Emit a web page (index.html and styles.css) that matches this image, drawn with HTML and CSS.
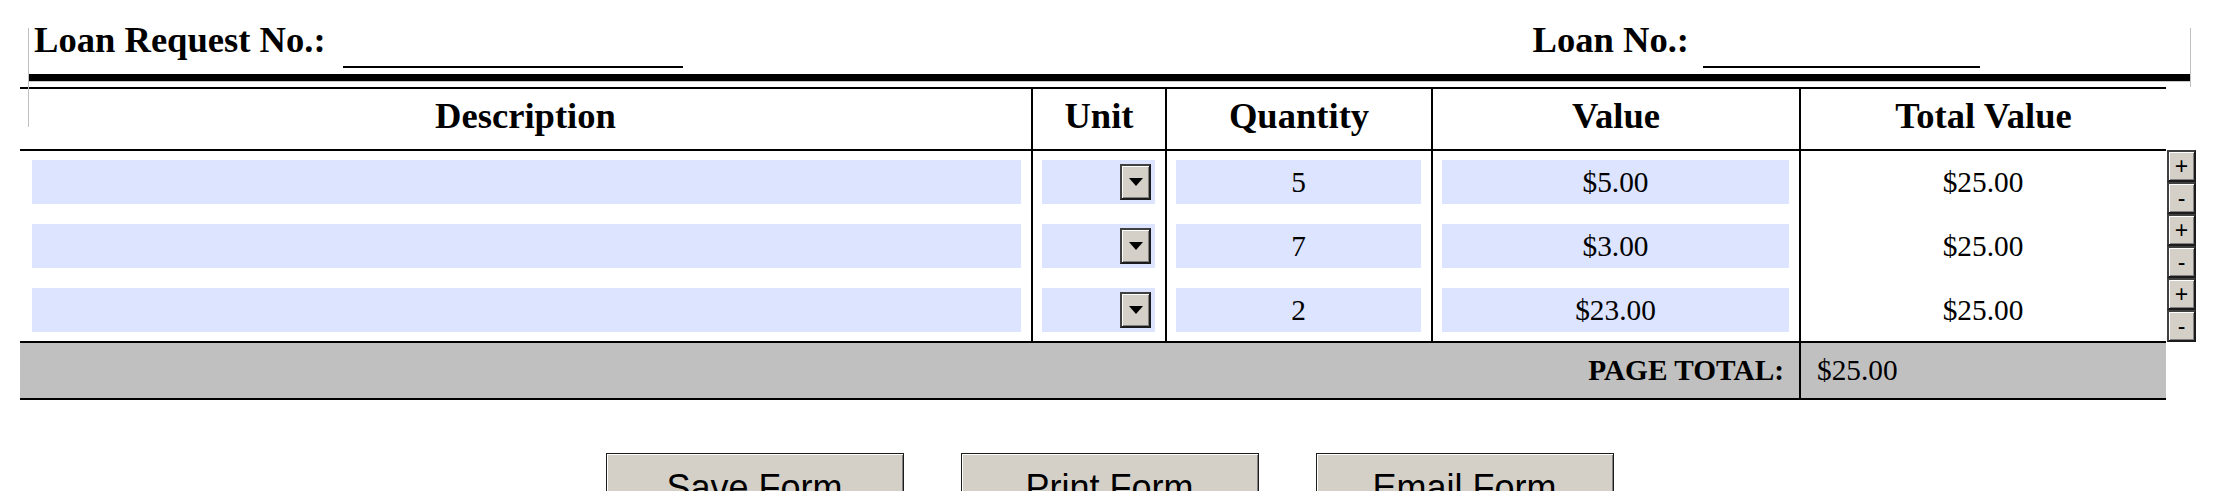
FILE: index.html
```html
<!DOCTYPE html>
<html>
<head>
<meta charset="utf-8">
<title>Loan Request</title>
<link rel="stylesheet" href="styles.css">
</head>
<body>
<div class="page">
  <div class="head">
    <div class="head-row">
      <span class="label label-req">Loan Request No.:</span><span class="blank blank-req"></span>
      <span class="label label-loan">Loan No.:</span><span class="blank blank-loan"></span>
    </div>
    <div class="bar"></div>
  </div>

  <div class="items">
    <div class="thead grid">
      <div class="th">Description</div>
      <div class="th">Unit</div>
      <div class="th">Quantity</div>
      <div class="th">Value</div>
      <div class="th last">Total Value</div>
    </div>
    <div class="tbody">
      <div class="rows">
        <div class="row grid">
          <div class="td desc"><div class="field"></div></div>
          <div class="td unit"><div class="field select"><span class="drop"><span class="tri"></span></span></div></div>
          <div class="td"><div class="field">5</div></div>
          <div class="td"><div class="field">$5.00</div></div>
          <div class="td last"><div class="plain">$25.00</div></div>
        </div>
        <div class="row grid">
          <div class="td desc"><div class="field"></div></div>
          <div class="td unit"><div class="field select"><span class="drop"><span class="tri"></span></span></div></div>
          <div class="td"><div class="field">7</div></div>
          <div class="td"><div class="field">$3.00</div></div>
          <div class="td last"><div class="plain">$25.00</div></div>
        </div>
        <div class="row grid final">
          <div class="td desc"><div class="field"></div></div>
          <div class="td unit"><div class="field select"><span class="drop"><span class="tri"></span></span></div></div>
          <div class="td"><div class="field">2</div></div>
          <div class="td"><div class="field">$23.00</div></div>
          <div class="td last"><div class="plain">$25.00</div></div>
        </div>
      </div>
      <div class="side">
        <button class="pm">+</button>
        <button class="pm">-</button>
        <button class="pm">+</button>
        <button class="pm">-</button>
        <button class="pm">+</button>
        <button class="pm">-</button>
      </div>
    </div>
    <div class="tfoot">
      <div class="ft-label">PAGE TOTAL:</div>
      <div class="ft-value">$25.00</div>
    </div>
  </div>

  <div class="actions">
    <button class="act">Save Form</button>
    <button class="act">Print Form</button>
    <button class="act">Email Form</button>
  </div>
</div>
</body>
</html>
```

FILE: styles.css
```css
html, body {
  margin: 0;
  padding: 0;
  background: #ffffff;
}
body {
  font-family: "Liberation Serif", "Times New Roman", serif;
  color: #000;
  overflow: hidden;
}
.page {
  padding-top: 28px;
}

/* header */
.head {
  position: relative;
  margin-left: 28px;
  width: 2163px;
  box-sizing: border-box;
  border-left: 1px solid #c0c0c0;
  border-right: 1px solid #c0c0c0;
  padding-bottom: 5px;
}
.head::before {
  content: "";
  position: absolute;
  left: -1px;
  top: 100%;
  width: 1px;
  height: 40px;
  background: #c0c0c0;
  z-index: 2;
}
.head-row {
  display: flex;
  align-items: flex-start;
  height: 40px;
}
.label {
  font-weight: bold;
  font-size: 36.6px;
  line-height: 24px;
  white-space: nowrap;
}
.label-req {
  margin-left: 5px;
}
.blank {
  display: inline-block;
  height: 38px;
  border-bottom: 2px solid #000;
}
.blank-req {
  width: 340px;
  margin-left: 17px;
}
.label-loan {
  margin-left: auto;
}
.blank-loan {
  width: 277px;
  margin-left: 14px;
  margin-right: 210px;
}
.bar {
  margin-top: 6px;
  height: 7px;
  background: #000;
  border-bottom: 1px solid #c8c8c8;
}

/* items table */
.items {
  margin-left: 20px;
}
.grid {
  display: grid;
  grid-template-columns: 1013px 134px 266px 368px 365px;
  width: 2146px;
}
.thead {
  border-top: 2px solid #000;
  border-bottom: 2px solid #000;
}
.th {
  box-sizing: border-box;
  height: 60px;
  padding-top: 9px;
  font-weight: bold;
  font-size: 36.6px;
  line-height: 36px;
  text-align: center;
  border-right: 2px solid #000;
}
.th.last, .td.last {
  border-right: none;
}
.tbody {
  display: flex;
  align-items: flex-start;
}
.rows {
  width: 2146px;
  border-bottom: 2px solid #000;
}
.td {
  box-sizing: border-box;
  padding: 9px 10px 11px 9px;
  border-right: 2px solid #000;
  font-size: 29.33px;
}
.row.final .td {
  padding-bottom: 9px;
}
.td.desc {
  padding-left: 12px;
}
.field {
  height: 44px;
  line-height: 44px;
  background: #dde4ff;
  text-align: center;
}
.plain {
  height: 44px;
  line-height: 44px;
  text-align: center;
}
.field.select {
  display: flex;
  justify-content: flex-end;
  align-items: center;
  padding-right: 4px;
}
.drop {
  box-sizing: border-box;
  width: 31px;
  height: 36px;
  background: #d4d0c8;
  border: 2px solid #1c1c1c;
  border-top-color: #404040;
  border-left-color: #404040;
  box-shadow: inset 1px 1px 0 #ffffff, inset -1px -1px 0 #808080;
  display: flex;
  align-items: center;
  justify-content: center;
}
.tri {
  width: 0;
  height: 0;
  border-left: 7px solid transparent;
  border-right: 7px solid transparent;
  border-top: 8px solid #000;
}
.side {
  display: flex;
  flex-direction: column;
  margin-top: -1px;
  margin-left: 1px;
}
.pm {
  box-sizing: border-box;
  width: 29px;
  height: 32px;
  margin: 0;
  padding: 0;
  background: #d4d0c8;
  border: 2px solid #1c1c1c;
  border-top-color: #404040;
  border-left-color: #404040;
  box-shadow: inset 1px 1px 0 #ffffff, inset -1px -1px 0 #808080;
  font-family: "Liberation Sans", Arial, sans-serif;
  font-size: 23px;
  line-height: 26px;
  color: #000;
  text-align: center;
}

/* total row */
.tfoot {
  display: grid;
  grid-template-columns: 1781px 365px;
  width: 2146px;
  background: #c0c0c0;
  border-bottom: 2px solid #000;
  height: 57px;
  box-sizing: border-box;
}
.ft-label {
  border-right: 2px solid #000;
  text-align: right;
  padding-right: 15px;
  font-weight: bold;
  font-size: 29.33px;
  line-height: 55px;
}
.ft-value {
  padding-left: 16px;
  font-size: 29.33px;
  line-height: 55px;
}

/* action buttons */
.actions {
  display: flex;
  justify-content: center;
  gap: 57px;
  margin-top: 53px;
}
.act {
  box-sizing: border-box;
  width: 298px;
  height: 64px;
  margin: 0;
  padding: 6px 0 0;
  background: #d4d0c8;
  border: 1px solid #1c1c1c;
  box-shadow: inset 1px 1px 0 #ffffff, inset -1px -1px 0 #808080;
  font-family: "Liberation Sans", Arial, sans-serif;
  font-size: 36px;
  line-height: 40px;
  color: #000;
  vertical-align: top;
}
```
